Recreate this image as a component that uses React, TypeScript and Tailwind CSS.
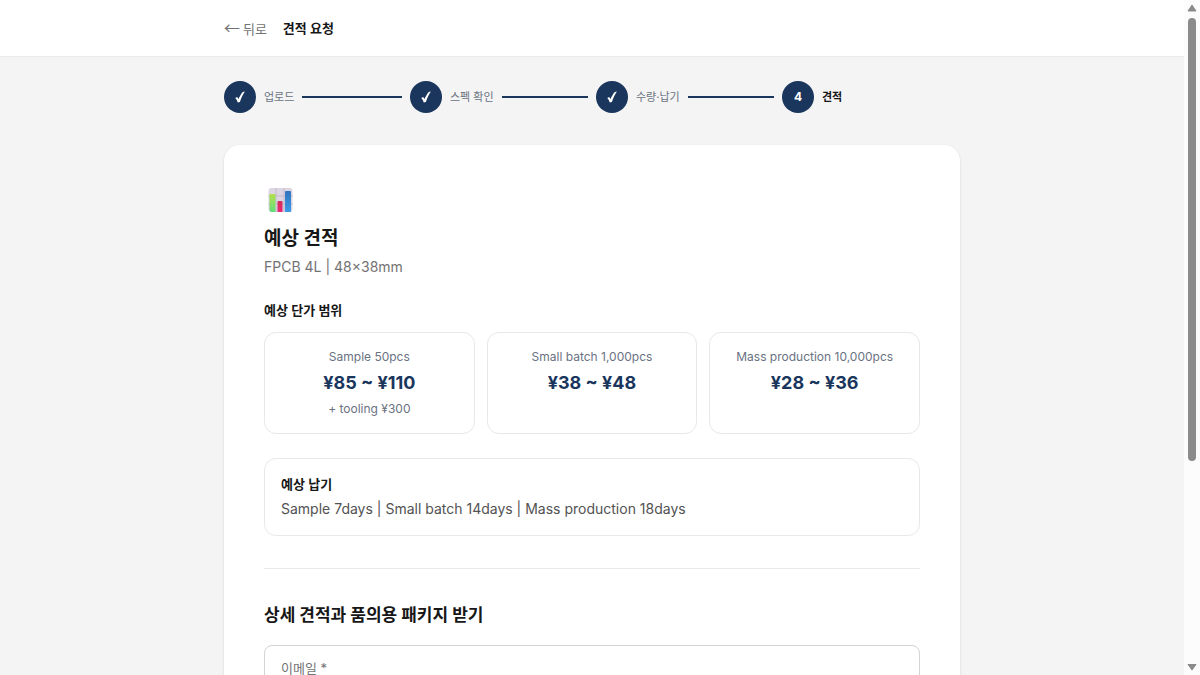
import type { ReactNode } from 'react';

const steps = [
  { label: '업로드', done: true },
  { label: '스펙 확인', done: true },
  { label: '수량·납기', done: true },
  { label: '견적', done: false },
];

const prices = [
  { name: 'Sample 50pcs', range: '¥85 ~ ¥110', note: '+ tooling ¥300' },
  { name: 'Small batch 1,000pcs', range: '¥38 ~ ¥48' },
  { name: 'Mass production 10,000pcs', range: '¥28 ~ ¥36' },
];

const ChartIcon = () => (
  <svg viewBox="0 0 32 32" className="size-8" aria-hidden="true">
    <defs>
      <linearGradient id="green" x1="0" y1="0" x2="0" y2="1">
        <stop offset="0" stopColor="#b4e04c" />
        <stop offset="1" stopColor="#62dc7c" />
      </linearGradient>
      <linearGradient id="red" x1="0" y1="0" x2="0" y2="1">
        <stop offset="0" stopColor="#cf2f58" />
        <stop offset="1" stopColor="#ee2472" />
      </linearGradient>
      <linearGradient id="blue" x1="0" y1="0" x2="0" y2="1">
        <stop offset="0" stopColor="#2f74bd" />
        <stop offset="1" stopColor="#3f9be6" />
      </linearGradient>
    </defs>
    <rect x="4.500" y="3" width="24" height="24" rx="3" fill="#dcd5e3" />
    <path d="M12 3v24M20 3v24M4.500 11h24M4.500 19h24" stroke="#bdb2c8" strokeWidth="0.8" />
    <path d="M5.500 10a1 1 0 0 1 1-1h4a1 1 0 0 1 1 1v17h-4a2 2 0 0 1-2-2z" fill="url(#green)" />
    <path d="M13.500 17a1 1 0 0 1 1-1h3a1 1 0 0 1 1 1v10h-5z" fill="url(#red)" />
    <path d="M21 7a1 1 0 0 1 1-1h4a1 1 0 0 1 1 1v20h-6z" fill="url(#blue)" />
  </svg>
);

const CheckMark = () => (
  <svg viewBox="0 0 12 12" className="size-3" aria-hidden="true">
    <path
      d="M1.300 7.100 3.200 6.100 4.500 8.100C5.500 5.600 7 2.900 8.800 .9L10.900 .6C8.700 3.700 7.100 7.200 5.900 11.100L3.800 11.500C3.200 9.700 2.400 8.200 1.300 7.100z"
      fill="currentColor"
    />
  </svg>
);

const SectionLabel = ({ children }: { children: ReactNode }) => (
  <h3 className="text-[13px] leading-[19px] font-semibold">{children}</h3>
);

const Stepper = () => (
  <ol className="flex gap-2">
    {steps.map((step, i) => (
      <li key={step.label} className="flex flex-1 items-center gap-2">
        <span className="flex size-8 shrink-0 items-center justify-center rounded-full bg-[#1a365d] text-xs font-bold text-white">
          {step.done ? <CheckMark /> : i + 1}
        </span>
        <span
          className={
            step.done
              ? 'shrink-0 text-[11px] text-gray-500'
              : 'shrink-0 text-[11px] font-semibold text-neutral-900'
          }
        >
          {step.label}
        </span>
        {i < steps.length - 1 && <span className="h-0.5 flex-1 bg-[#1a365d]" />}
      </li>
    ))}
  </ol>
);

const ScrollRail = () => (
  <div className="flex w-4 shrink-0 flex-col items-center bg-[#fcfcfc]" aria-hidden="true">
    <svg viewBox="0 0 16 18" className="h-[18px] w-full shrink-0">
      <path d="M8 5 12 11H4z" fill="#8b8b8b" stroke="#8b8b8b" strokeLinejoin="round" />
    </svg>
    <div className="w-full flex-1">
      <div className="mx-auto h-[69.3%] w-2 rounded-full bg-[#8b8b8b]" />
    </div>
    <svg viewBox="0 0 16 18" className="h-[18px] w-full shrink-0">
      <path d="M8 13 12 7.500H4z" fill="#8b8b8b" stroke="#8b8b8b" strokeLinejoin="round" />
    </svg>
  </div>
);

const App = () => {
  return (
    <div className="flex h-screen bg-[#f4f4f4] font-[Inter,'Noto_Sans_CJK_KR',sans-serif] text-neutral-900">
      <div className="min-w-0 flex-1 overflow-y-auto [scrollbar-width:none]">
        <header className="border-b border-[#ebebeb] bg-white">
          <div className="mx-auto flex h-14 max-w-3xl items-center gap-4 px-4">
            <a
              href="#"
              className="font-['Noto_Sans_CJK_KR',sans-serif] text-[13px] leading-5 text-neutral-500"
            >
              <span className="text-base leading-5">←</span> 뒤로
            </a>
            <h1 className="text-[13px] leading-5 font-semibold">견적 요청</h1>
          </div>
        </header>

        <main className="mx-auto max-w-3xl px-4 py-6">
          <Stepper />

          <div className="mt-8 rounded-2xl bg-white p-10 shadow-sm">
            <ChartIcon />
            <h2 className="mt-2 text-[19px] leading-7 font-bold">예상 견적</h2>
            <p className="mt-1 mb-6 text-sm text-neutral-500">FPCB 4L | 48×38mm</p>

            <SectionLabel>예상 단가 범위</SectionLabel>
            <div className="mt-3 grid grid-cols-3 gap-3">
              {prices.map((price) => (
                <div
                  key={price.name}
                  className="rounded-xl border border-[#e8e8e8] p-4 text-center"
                >
                  <p className="text-xs text-gray-500">{price.name}</p>
                  <p className="mt-1 text-lg font-bold text-[#1a365d]">{price.range}</p>
                  {price.note && <p className="mt-1 text-xs text-gray-500">{price.note}</p>}
                </div>
              ))}
            </div>

            <div className="mt-6 rounded-xl border border-[#e8e8e8] p-4">
              <SectionLabel>예상 납기</SectionLabel>
              <p className="mt-1 text-sm leading-[21px] text-neutral-600">
                Sample 7days | Small batch 14days | Mass production 18days
              </p>
            </div>

            <form className="mt-8 border-t border-[#e8e8e8] pt-8">
              <h2 className="text-[17px] leading-7 font-bold">상세 견적과 품의용 패키지 받기</h2>
              <input
                type="email"
                required
                aria-label="이메일"
                placeholder="이메일 *"
                className="mt-4 h-[46px] w-full rounded-lg border border-[#d4d4d4] px-4 text-[13px] placeholder:text-neutral-500"
              />
            </form>
          </div>
        </main>
      </div>
      <ScrollRail />
    </div>
  );
};

export default App;
